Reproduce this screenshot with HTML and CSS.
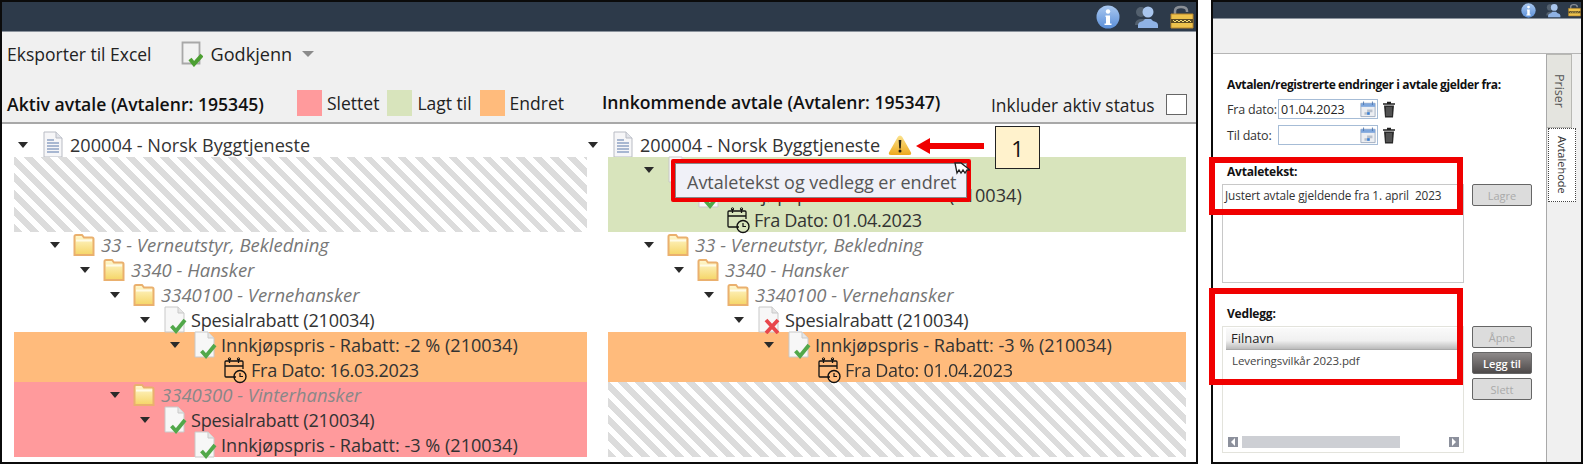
FILE: index.html
```html
<!DOCTYPE html>
<html lang="no">
<head>
<meta charset="utf-8">
<title>Avtale</title>
<link rel="stylesheet" href="styles.css">
</head>
<body>
<svg class="defs" aria-hidden="true">
  <defs>
    <linearGradient id="gFolder" x1="0" y1="0" x2="0" y2="1"><stop offset="0" stop-color="#fff8d0"/><stop offset="1" stop-color="#f5d566"/></linearGradient>
    <linearGradient id="gInfo" x1="0" y1="0" x2="0" y2="1"><stop offset="0" stop-color="#a9c8f0"/><stop offset="1" stop-color="#5b8fd8"/></linearGradient>
    <linearGradient id="gWarn" x1="0" y1="0" x2="0" y2="1"><stop offset="0" stop-color="#fbe28c"/><stop offset="1" stop-color="#eda91f"/></linearGradient>
    <symbol id="i-list" viewBox="0 0 20 27"><path d="M1 1h12l6 6v19H1z" fill="#f6f6f8" stroke="#b9bcc4"/><path d="M13 1v6h6" fill="#e2e4ea" stroke="#b9bcc4"/><path d="M4 9h7M4 12h12M4 15h12M4 18h12M4 21h12" stroke="#8ea2c4" stroke-width="1.6"/></symbol>
    <symbol id="i-folder" viewBox="0 0 22 24"><path d="M1.500 22V3.500q0-1.500 1.500-1.500h6l2 2.500h8q1.500 0 1.500 1.500V22z" fill="url(#gFolder)" stroke="#eab06e" stroke-width="2"/><path d="M3 7.500h16" stroke="#fffbe6" stroke-width="2"/></symbol>
    <symbol id="i-check" viewBox="0 0 24 28"><path d="M2 1h13l6 6v19H2z" fill="#f7f7f7" stroke="#c9c9c9"/><path d="M15 1v6h6" fill="#e6e6e6" stroke="#c9c9c9"/><path d="M8.500 20l4.500 5 9-11" fill="none" stroke="#52a84a" stroke-width="3.800"/></symbol>
    <symbol id="i-cross" viewBox="0 0 24 28"><path d="M2 1h13l6 6v19H2z" fill="#f7f7f7" stroke="#c9c9c9"/><path d="M15 1v6h6" fill="#e6e6e6" stroke="#c9c9c9"/><path d="M9 14l12 13M21 14L9 27" fill="none" stroke="#e8474c" stroke-width="3.800"/></symbol>
    <symbol id="i-cal" viewBox="0 0 24 28"><path d="M13 21H3q-1 0-1-1V6q0-1 1-1h16q1 0 1 1v7M2 10h18M6.500 3v4M15.500 3v4" fill="none" stroke="#111" stroke-width="1.300"/><circle cx="6.500" cy="3" r="1.200" fill="none" stroke="#111"/><circle cx="15.500" cy="3" r="1.200" fill="none" stroke="#111"/><circle cx="17" cy="20.500" r="6" fill="none" stroke="#111" stroke-width="1.400"/><path d="M17 17v3.500h3" fill="none" stroke="#111" stroke-width="1.200"/></symbol>
    <symbol id="i-appr" viewBox="0 0 22 26"><path d="M1.500 1.500h17v21h-17z" fill="#f2f2f2" stroke="#a8a8a8" stroke-width="1.800"/><path d="M9 18l4 5 8-9" fill="none" stroke="#4c9f32" stroke-width="4"/></symbol>
    <symbol id="i-info" viewBox="0 0 24 24"><circle cx="12" cy="12" r="11.500" fill="url(#gInfo)"/><circle cx="12" cy="6.500" r="2.200" fill="#fff"/><path d="M9.500 10.500h4.500v8h1.500V20h-7v-1.500H10v-6.500H9.500z" fill="#fff"/></symbol>
    <symbol id="i-user" viewBox="0 0 26 24"><circle cx="8" cy="7" r="5" fill="#53606e"/><path d="M2 20q0-5 5-6h5v6z" fill="#53606e"/><circle cx="15" cy="7" r="5.500" fill="#a9c6ee"/><path d="M5 23v-3q0-3 5-4l2-2h6l2 2q5 1 5 4v3z" fill="#8fb2e4"/></symbol>
    <symbol id="i-lock" viewBox="0 0 24 24"><path d="M5 10V6q0-4 6-4t6 4v1" fill="none" stroke="#8a8f96" stroke-width="2.500"/><path d="M1 9h22v14H1z" fill="#edc24c" stroke="#b9862a"/><path d="M1 14h22v4H1z" fill="#5a4a22"/><path d="M3 15l2 2 2-2 2 2 2-2 2 2 2-2 2 2 2-2 2 2" fill="none" stroke="#f4dc7a"/></symbol>
    <symbol id="i-warn" viewBox="0 0 24 22"><path d="M12 1.500q1.500 0 2.300 1.500l8.700 15.500q.8 2.500-2 2.500H3q-2.800 0-2-2.500L9.700 3Q10.500 1.500 12 1.500z" fill="url(#gWarn)"/><path d="M10.700 6h2.600l-.5 8.500h-1.600z" fill="#2c2410"/><circle cx="12" cy="17" r="1.500" fill="#2c2410"/></symbol>
    <symbol id="i-date" viewBox="0 0 18 18"><path d="M1 2h16v15H1z" fill="#eceef2" stroke="#9aa8bc"/><path d="M1 2h16v4H1z" fill="#7ea6dc"/><path d="M4 0v4M14 0v4" stroke="#4f78b0"/><path d="M8 9h3v3H8zM11 9h3v3h-3zM5 12h3v3H5z" fill="#b8c0cc"/><path d="M8 12h3v3H8z" fill="#3d7fd0"/></symbol>
    <symbol id="i-trash" viewBox="0 0 14 17"><path d="M5 1.500h4M1 3h12" stroke="#222" stroke-width="1.500"/><path d="M2 4.500h10l-1 12H3z" fill="#2a2a2a"/><path d="M5 6v9M7 6v9M9 6v9" stroke="#8d8d8d" stroke-width=".8"/></symbol>
    <symbol id="i-cursor" viewBox="0 0 16 13"><path d="M1 1l2 10 2-3 2 3 2-3 2 3 2-3 3 0-9-7z" fill="#fff" stroke="#222" stroke-width="1.300"/></symbol>
  </defs>
</svg>

<div class="page">
  <section class="win win-main">
    <header class="bar">
      <svg class="bar-info"><use href="#i-info"/></svg>
      <svg class="bar-user"><use href="#i-user"/></svg>
      <svg class="bar-lock"><use href="#i-lock"/></svg>
    </header>
    <div class="toolbar">
      <div class="tool-row">
        <span class="tool">Eksporter til Excel</span>
        <svg class="appr"><use href="#i-appr"/></svg>
        <span>Godkjenn</span>
        <span class="drop"></span>
      </div>
      <div class="head-row">
        <div class="head-left">
          <strong class="pane-title">Aktiv avtale (Avtalenr: 195345)</strong>
          <span class="swatch sw-red"></span><span class="leg">Slettet</span>
          <span class="swatch sw-green"></span><span class="leg">Lagt til</span>
          <span class="swatch sw-orange"></span><span class="leg">Endret</span>
        </div>
        <div class="head-right">
          <strong class="pane-title pane-title-in">Innkommende avtale (Avtalenr: 195347)</strong>
          <span class="leg leg-check">Inkluder aktiv status</span>
          <span class="checkbox"></span>
        </div>
      </div>
    </div>
    <div class="panes">
      <div class="pane pane-left">
        <div class="title-row"><span class="twist"></span><svg class="ic-list"><use href="#i-list"/></svg><span>200004 - Norsk Byggtjeneste</span></div>
        <div class="band hatch"></div>
        <div class="row lv1"><span class="twist"></span><svg class="ic-folder"><use href="#i-folder"/></svg><em>33 - Verneutstyr, Bekledning</em></div>
        <div class="row lv2"><span class="twist"></span><svg class="ic-folder"><use href="#i-folder"/></svg><em>3340 - Hansker</em></div>
        <div class="row lv3"><span class="twist"></span><svg class="ic-folder"><use href="#i-folder"/></svg><em>3340100 - Vernehansker</em></div>
        <div class="row lv4"><span class="twist"></span><svg class="ic-doc"><use href="#i-check"/></svg><span class="spes">Spesialrabatt (210034)</span></div>
        <div class="band orange">
          <div class="row lv5"><span class="twist"></span><svg class="ic-doc"><use href="#i-check"/></svg><span>Innkjøpspris - Rabatt: -2 % (210034)</span></div>
          <div class="row lv6"><span class="twist none"></span><svg class="ic-doc"><use href="#i-cal"/></svg><span class="fra">Fra Dato: 16.03.2023</span></div>
        </div>
        <div class="band red">
          <div class="row lv3"><span class="twist"></span><svg class="ic-folder"><use href="#i-folder"/></svg><em>3340300 - Vinterhansker</em></div>
          <div class="row lv4"><span class="twist"></span><svg class="ic-doc"><use href="#i-check"/></svg><span class="spes">Spesialrabatt (210034)</span></div>
          <div class="row lv5"><span class="twist none"></span><svg class="ic-doc"><use href="#i-check"/></svg><span>Innkjøpspris - Rabatt: -3 % (210034)</span></div>
        </div>
      </div>
      <div class="pane pane-right">
        <div class="title-row"><span class="twist"></span><svg class="ic-list"><use href="#i-list"/></svg><span>200004 - Norsk Byggtjeneste</span><svg class="ic-warn"><use href="#i-warn"/></svg></div>
        <div class="band green">
          <div class="row lv1"><span class="twist"></span><svg class="ic-doc"><use href="#i-check"/></svg><span class="spes">Spesialrabatt (210034)</span></div>
          <div class="row lv2"><span class="twist"></span><svg class="ic-doc"><use href="#i-check"/></svg><span>Innkjøpspris - Rabatt: -3 % (210034)</span></div>
          <div class="row lv3"><span class="twist none"></span><svg class="ic-doc"><use href="#i-cal"/></svg><span class="fra">Fra Dato: 01.04.2023</span></div>
        </div>
        <div class="row lv1"><span class="twist"></span><svg class="ic-folder"><use href="#i-folder"/></svg><em>33 - Verneutstyr, Bekledning</em></div>
        <div class="row lv2"><span class="twist"></span><svg class="ic-folder"><use href="#i-folder"/></svg><em>3340 - Hansker</em></div>
        <div class="row lv3"><span class="twist"></span><svg class="ic-folder"><use href="#i-folder"/></svg><em>3340100 - Vernehansker</em></div>
        <div class="row lv4"><span class="twist"></span><svg class="ic-doc"><use href="#i-cross"/></svg><span class="spes">Spesialrabatt (210034)</span></div>
        <div class="band orange">
          <div class="row lv5"><span class="twist"></span><svg class="ic-doc"><use href="#i-check"/></svg><span>Innkjøpspris - Rabatt: -3 % (210034)</span></div>
          <div class="row lv6"><span class="twist none"></span><svg class="ic-doc"><use href="#i-cal"/></svg><span class="fra">Fra Dato: 01.04.2023</span></div>
        </div>
        <div class="band hatch"></div>
      </div>
    </div>
  </section>

  <section class="win win-side">
    <header class="bar bar-small">
      <svg class="sm-info"><use href="#i-info"/></svg>
      <svg class="sm-user"><use href="#i-user"/></svg>
      <svg class="sm-lock"><use href="#i-lock"/></svg>
    </header>
    <div class="side-toolbar"></div>
    <div class="side-body">
      <div class="form">
        <h2 class="form-h">Avtalen/registrerte endringer i avtale gjelder fra:</h2>
        <div class="date-row">
          <label class="date-label">Fra dato:</label>
          <div class="date-input"><span>01.04.2023</span><svg class="ic-date"><use href="#i-date"/></svg></div>
          <svg class="ic-trash"><use href="#i-trash"/></svg>
        </div>
        <div class="date-row">
          <label class="date-label">Til dato:</label>
          <div class="date-input"><span></span><svg class="ic-date"><use href="#i-date"/></svg></div>
          <svg class="ic-trash"><use href="#i-trash"/></svg>
        </div>
        <h3 class="sec-h sec-first">Avtaletekst:</h3>
        <div class="sec-row">
          <div class="textbox">Justert avtale gjeldende fra 1. april&nbsp; 2023</div>
          <div class="btns"><span class="btn">Lagre</span></div>
        </div>
        <h3 class="sec-h sec-second">Vedlegg:</h3>
        <div class="sec-row">
          <div class="listbox">
            <div class="list-head">Filnavn</div>
            <div class="list-item">Leveringsvilkår 2023.pdf</div>
            <div class="scroll"><span class="sc-btn sc-l"></span><span class="sc-thumb"></span><span class="sc-btn sc-r"></span></div>
          </div>
          <div class="btns"><span class="btn">Åpne</span><span class="btn btn-on">Legg til</span><span class="btn">Slett</span></div>
        </div>
      </div>
      <div class="tabs">
        <div class="tab tab-off"><span>Priser</span></div>
        <div class="tab tab-on"><span>Avtalehode</span></div>
      </div>
    </div>
  </section>

  <div class="tooltip">Avtaletekst og vedlegg er endret</div>
  <div class="mark mark-tip"></div>
  <svg class="cursor"><use href="#i-cursor"/></svg>
  <svg class="arrow" viewBox="0 0 68 18"><path d="M0 9L14 1v5h54v6H14v5z" fill="#f00000"/></svg>
  <div class="callout">1</div>
  <div class="mark mark-text"></div>
  <div class="mark mark-file"></div>
</div>
</body>
</html>
```
FILE: styles.css
```css
* { box-sizing: border-box; }
html, body { margin: 0; padding: 0; background: #fff; }
body { font-family: "Open Sans", "Noto Sans", sans-serif; color: #222; overflow: hidden; }
.defs { position: absolute; width: 0; height: 0; }
.page { position: relative; display: flex; width: 1585px; height: 464px; filter: blur(.35px); }

.win { display: flex; flex-direction: column; height: 464px; border: 2px solid #0b0b0b; background: #fff; }
.win-main { width: 1198px; }
.win-side { width: 372px; margin-left: 13px; }

.bar { display: flex; align-items: center; justify-content: flex-end; height: 30px; background: #2d3a4a; border-bottom: 1px solid #8a929c; flex: none; }
.bar-info { width: 24px; height: 24px; margin-right: 13px; }
.bar-user { width: 26px; height: 24px; margin-right: 11px; }
.bar-lock { width: 24px; height: 24px; margin-right: 2px; }
.bar-small { height: 17px; }
.sm-info { width: 15px; height: 15px; margin-right: 9px; }
.sm-user { width: 16px; height: 15px; margin-right: 7px; }
.sm-lock { width: 13px; height: 14px; }

.toolbar { flex: none; height: 92px; background: #f0f0f0; border-bottom: 2px solid #a8a8a8; }
.tool-row { display: flex; align-items: center; height: 44px; padding: 0 0 0 5px; font-size: 18.100px; }
.tool { font-size: 17.500px; }
.appr { width: 22px; height: 26px; margin: 0 8px 0 29px; }
.drop { width: 0; height: 0; margin: 0 0 0 10px; border: 6px solid transparent; border-top: 6px solid #8b8b8b; border-bottom: 0; }
.head-row { display: flex; height: 46px; }
.head-left { display: flex; align-items: flex-start; width: 585px; padding: 14px 0 0 5px; }
.head-right { display: flex; align-items: flex-start; flex: 1; padding: 18px 5px 0 15px; }
.pane-title { font-size: 17.600px; line-height: 26px; margin-top: 1px; font-weight: 600; color: #111; white-space: nowrap; width: 290px; }
.pane-title-in { width: 389px; margin-top: -5px; }
.swatch { width: 25px; height: 26px; margin-right: 5px; flex: none; }
.sw-red { background: #ff9a9c; }
.sw-green { background: #d8e4bc; }
.sw-orange { background: #ffbb7c; }
.leg { font-size: 17.500px; line-height: 26px; margin-right: 8px; white-space: nowrap; }
.leg-check { margin: -2px 11px 0 0; font-size: 17.400px; }
.checkbox { width: 21px; height: 21px; border: 1px solid #666; background: #fff; flex: none; }

.panes { display: flex; flex: 1; min-height: 0; }
.pane { font-size: 18.100px; }
.pane-left { width: 585px; padding-left: 12px; }
.pane-right { width: 600px; padding-left: 21px; }
.title-row { display: flex; align-items: center; height: 33px; padding-top: 8px; overflow: hidden; color: #333; }
.pane-left .title-row { margin-left: -12px; padding-left: 16px; }
.pane-right .title-row { margin-left: -21px; padding-left: 1px; }
.title-row .twist { margin-right: 15px; }
.ic-list { width: 20px; height: 27px; margin-right: 7px; flex: none; }
.ic-warn { width: 24px; height: 22px; margin-left: 8px; flex: none; }

.band { width: 573px; }
.pane-right .band { width: 578px; }
.hatch { height: 75px; background: repeating-linear-gradient(45deg, #dcdcdc 0 6px, #fff 6px 12px); }
.green { height: 75px; background: #d8e4bc; }
.orange { height: 50px; background: #ffbb7c; }
.red { height: 75px; background: #ff9a9c; }

.row { display: flex; align-items: center; height: 25px; white-space: nowrap; color: #333; }
.row em { font-size: 18.500px; color: #777; font-style: italic; }
.red .row em { color: #888; }
.spes { letter-spacing: -.2px; }
.fra { letter-spacing: -.3px; }
.lv1 { padding-left: 36px; }
.lv2 { padding-left: 66px; }
.lv3 { padding-left: 96px; }
.lv4 { padding-left: 126px; }
.lv5 { padding-left: 156px; }
.lv6 { padding-left: 186px; }
.green .lv3 { padding-left: 95px; }
.twist { width: 0; height: 0; flex: none; margin-right: 13px; border: 5.500px solid transparent; border-top: 6px solid #2a2a2a; border-bottom: 0; }
.twist.none { border-top-color: transparent; }
.ic-folder { width: 22px; height: 24px; margin-right: 6px; flex: none; }
.ic-doc { width: 24px; height: 28px; margin-right: 4px; flex: none; overflow: visible; }

.side-toolbar { height: 35px; flex: none; background: #f0f0f0; border-bottom: 1px solid #b5b5b5; }
.side-body { display: flex; flex: 1; min-height: 0; background: #f0f0f0; }
.form { width: 336px; background: #fff; border-right: 1px solid #a9a9a9; padding: 22px 0 0 9px; }
.form-h { margin: 0 0 5px 5px; height: 18px; line-height: 18px; font-size: 12px; font-weight: 700; color: #111; white-space: nowrap; letter-spacing: -.38px; }
.date-row { display: flex; align-items: center; height: 20px; margin: 0 0 6px 5px; }
.date-label { width: 51px; font-size: 12.500px; color: #333; letter-spacing: -.2px; white-space: nowrap; }
.date-input { display: flex; align-items: center; justify-content: space-between; width: 100px; height: 20px; border: 1px solid #a6bcd6; padding: 0 1px 0 2px; font-size: 12.500px; color: #222; background: #fff; }
.ic-date { width: 16px; height: 17px; }
.ic-trash { width: 14px; height: 17px; margin-left: 4px; }
.sec-h { margin: 0 0 3px 5px; height: 18px; line-height: 18px; font-size: 12px; font-weight: 700; color: #111; letter-spacing: -.2px; }
.sec-first { margin-top: 18px; }
.sec-second { margin-top: 22px; }
.sec-row { display: flex; }
.textbox { width: 242px; height: 99px; border: 1px solid #c8c8c8; padding: 2px; font-size: 11.800px; color: #333; white-space: nowrap; letter-spacing: -.1px; }
.btns { display: flex; flex-direction: column; gap: 4px; margin-left: 8px; }
.btn { display: flex; align-items: center; justify-content: center; width: 60px; height: 22px; border: 1px solid #666; border-radius: 2px; background: #dcdcdc; color: #aaa; font-size: 11px; }
.btn-on { background: linear-gradient(#8e8a8a, #4e4a4a); color: #fff; font-weight: 600; }
.listbox { display: flex; flex-direction: column; width: 242px; height: 127px; border: 1px solid #e3e3dc; padding: 1px 2px 0 3px; }
.list-head { height: 22px; line-height: 21px; padding-left: 5px; font-size: 13px; color: #222; background: linear-gradient(#fafafa, #f0f0f0 60%, #bbb); border-bottom: 1px solid #aaa; }
.list-item { padding: 3px 0 0 6px; font-size: 11.500px; color: #444; letter-spacing: -.1px; }
.scroll { display: flex; align-items: center; margin: auto 2px 4px; height: 13px; }
.sc-btn { position: relative; width: 10px; height: 10px; background: #8c909c; flex: none; }
.sc-l::after, .sc-r::after { content: ""; position: absolute; top: 1px; border: 4px solid transparent; }
.sc-l::after { left: -1px; border-right-color: #fff; }
.sc-r::after { left: 3px; border-left-color: #fff; }
.sc-thumb { width: 158px; height: 12px; margin: 0 49px 0 4px; background: #cdcfd4; }

.tabs { display: flex; flex-direction: column; width: 34px; }
.tab { display: flex; align-items: center; justify-content: center; height: 74px; }
.tab span { writing-mode: vertical-rl; }
.tab-off { width: 25px; background: #e4e4df; border: 1px solid #b8b8b4; border-left: 0; color: #555; font-size: 12.500px; }
.tab-on { width: 28px; margin-left: 1px; background: #fff; border: 1px dotted #444; color: #333; font-size: 11px; }

.tooltip { position: absolute; left: 675px; top: 163px; width: 292px; height: 35px; padding-left: 11px; line-height: 36px; background: #f0f1f8; border: 1px solid #888; font-size: 18px; color: #555; white-space: nowrap; }
.mark { position: absolute; border: 4px solid #f00000; }
.mark-tip { left: 671px; top: 159px; width: 300px; height: 43px; border-radius: 2px; }
.mark-text { left: 1209px; top: 157px; width: 254px; height: 58px; border-width: 6px; }
.mark-file { left: 1209px; top: 288px; width: 254px; height: 97px; border-width: 6px; }
.cursor { position: absolute; left: 954px; top: 162px; width: 16px; height: 13px; }
.arrow { position: absolute; left: 916px; top: 137px; width: 68px; height: 18px; }
.callout { position: absolute; left: 995px; top: 126px; width: 45px; height: 43px; border: 1px solid #222; background: #fff2cc; font-size: 22px; line-height: 42px; text-align: center; color: #111; }
```
